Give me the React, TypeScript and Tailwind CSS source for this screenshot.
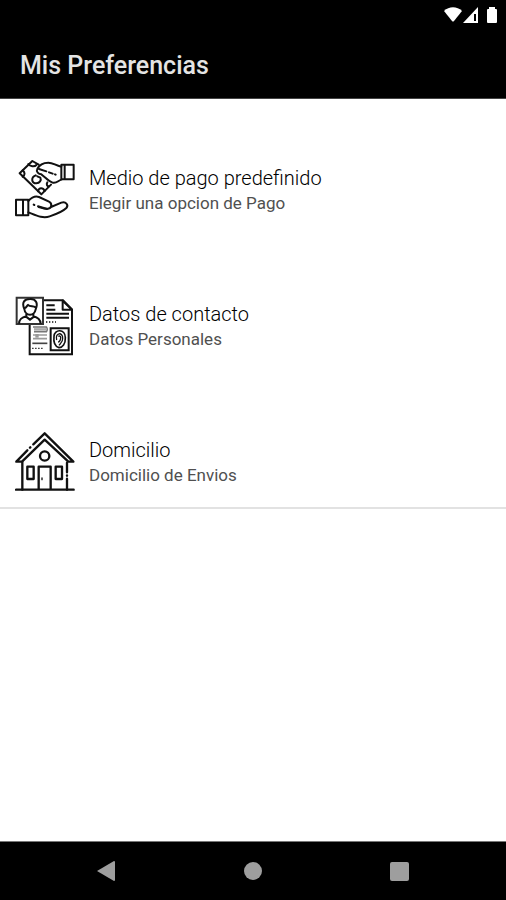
import type { ReactNode } from "react";

function PaymentIcon() {
  return (
    <svg viewBox="30 30 180 180" className="size-[60px] shrink-0" fill="none" stroke="#111" strokeWidth="6" strokeLinejoin="round" strokeLinecap="round" aria-hidden="true">
      <path d="M101 44 L82 33 L44 70 L109 133 L138 104" />
      <path d="M70 42 C75 50 89 51 94 45 M53 61 C61 67 60 76 53 80 M99 124 C102 112 114 112 119 123 M127 97 C123 103 127 110 132 109" />
      <path d="M97 57 C105 40 118 38 130 38 C145 38 151 47 169 50 M97 57 C92 65 101 73 109 73 C122 83 130 94 143 98 C155 101 159 92 169 89" />
      <path d="M102 57 L124 64 M132 67 L143 71 M150 73 L152 74" />
      <path d="M92 76 C77 82 79 100 94 100 C104 99 110 91 106 83 L97 79" />
      <path d="M169 44 H206 V88 H169 Z M179 46 V86" />
      <path d="M33 149 H70 V196 H33 Z M54 151 V194" />
      <path d="M70 153 C80 142 91 137 102 141 L132 155 C142 160 141 174 129 176 C119 178 109 173 101 171 M138 171 L169 158 C182 153 192 165 184 174 C172 186 149 194 134 199 C113 207 91 195 70 187" />
      <path d="M86 164 L88 165 M99 169 L126 177" />
    </svg>
  );
}

function ContactIcon() {
  return (
    <svg viewBox="30 30 180 180" className="size-[60px] shrink-0" fill="none" stroke="#111" strokeWidth="6" aria-hidden="true">
      <path d="M115 43 H174 L201 70 V205 H74 V116" />
      <path d="M173 44 V71 H201 Z" strokeLinejoin="round" />
      <path d="M35 35 H114 V114 H35 Z" stroke="#333" />
      <path d="M42 113 C43 98 51 94 64 91 V84 M85 84 V91 C98 94 106 100 107 113 M62 91 L75 101 L88 91" />
      <path d="M58 69 C49 48 59 39 75 39 C93 38 100 52 92 70 C90 80 83 86 75 86 C66 86 59 79 58 69 Z M58 67 C65 65 66 58 69 57 C76 63 84 59 92 64" />
      <path d="M124 58 H149 M124 71 H151 M124 83 H192 M124 95 H192" />
      <path d="M123 108 H153" strokeWidth="4" strokeDasharray="4 5" />
      <path d="M84 123 H124 Q129 130 124 137 H87" stroke="#777" strokeWidth="5" />
      <path d="M87 130 H126" stroke="#aaa" strokeWidth="7" />
      <path d="M84 147 H126 M84 158 H126" stroke="#999" strokeWidth="5" />
      <path d="M91 144 H101 V155 H91 Z" fill="#999" stroke="none" />
      <path d="M82 172 H127" stroke="#444" strokeWidth="5" />
      <path d="M81 187 H113" strokeWidth="4" strokeDasharray="5 4" stroke="#444" />
      <path d="M137 127 H191 V193 H137 Z" />
      <path d="M147 151 C148 128 181 128 181 155 C182 174 172 185 162 185 C149 181 145 168 147 151 Z" strokeWidth="5" />
      <path d="M155 162 C149 139 174 137 173 157 C174 168 166 173 162 178 M160 151 C170 146 169 163 160 169" strokeWidth="4" />
    </svg>
  );
}

function HomeIcon() {
  return (
    <svg viewBox="30 30 180 180" className="size-[60px] shrink-0" fill="none" stroke="#111" strokeWidth="7" strokeLinejoin="round" strokeLinecap="round" aria-hidden="true">
      <path d="M85 67 L119 34 L205 119 H190 L119 53 L51 119 H34 L67 85 M75 77 L76 76" />
      <circle cx="119" cy="102" r="14" />
      <path d="M52 120 V203 M186 122 V151 M186 160 V161 M186 170 V203" />
      <path d="M67 134 H86 V171 H67 Z M152 134 H171 V171 H152 Z" />
      <path d="M101 203 V134 H137 V203 M33 203 H206" />
      <path d="M111 168 V173" strokeWidth="4" />
    </svg>
  );
}

function StatusIcons() {
  return (
    <div className="flex h-[30px] items-center justify-end pr-2">
      <svg viewBox="0 0 54 18" className="h-[18px] w-[54px]" fill="#fff" role="img" aria-label="Wi-Fi, señal y batería">
        <path d="M0 5 C5 0 13 0 18 5 L10 15 Q9 16 8 15 Z" />
        <path fillRule="evenodd" d="M19 17 L34 1 V17 Z M30 8 V15 H32 V8 Z" />
        <path d="M45 3 V1 H51 V3 H52 Q53 3 53 4 V16 Q53 17 52 17 H44 Q43 17 43 16 V4 Q43 3 44 3 Z" />
      </svg>
    </div>
  );
}

type PreferenceProps = { icon: ReactNode; title: string; detail: string };

function Preference({ icon, title, detail }: PreferenceProps) {
  return (
    <li>
      <button type="button" className="flex w-full items-center gap-3.5 px-[15px] pt-[61px] pb-[15px] text-left">
        {icon}
        <span className="flex flex-col">
          <span className="text-[20px] leading-[26px] font-light text-black">{title}</span>
          <span className="text-[17px] leading-6 text-[#505050]">{detail}</span>
        </span>
      </button>
    </li>
  );
}

export default function App() {
  return (
    <div className="flex min-h-screen flex-col bg-white font-[Roboto,sans-serif]">
      <header className="border-b border-[#444] bg-black">
        <StatusIcons />
        <h1 className="px-5 pt-5 pb-4 text-[25px] leading-8 font-medium text-[#e4e4e4]">Mis Preferencias</h1>
      </header>
      <main className="flex-1">
        <ul className="border-b-2 border-[#e2e2e2]">
          <Preference icon={<PaymentIcon />} title="Medio de pago predefinido" detail="Elegir una opcion de Pago" />
          <Preference icon={<ContactIcon />} title="Datos de contacto" detail="Datos Personales" />
          <Preference icon={<HomeIcon />} title="Domicilio" detail="Domicilio de Envios" />
        </ul>
      </main>
      <nav aria-label="Navegación" className="flex h-[59px] justify-center border-t border-[#777] bg-black text-[#9e9e9e]">
        <button type="button" aria-label="Atrás" className="flex w-[146px] items-center justify-center">
          <svg viewBox="0 0 20 22" className="h-[22px] w-5" fill="currentColor" aria-hidden="true">
            <path d="M0 11 L17 1 Q18 1 18 2 V20 Q18 21 17 21 Z" />
          </svg>
        </button>
        <button type="button" aria-label="Inicio" className="flex w-[146px] items-center justify-center">
          <span className="size-[18px] rounded-full bg-current" />
        </button>
        <button type="button" aria-label="Recientes" className="flex w-[146px] items-center justify-center">
          <span className="size-[19px] rounded-xs bg-current" />
        </button>
      </nav>
    </div>
  );
}
